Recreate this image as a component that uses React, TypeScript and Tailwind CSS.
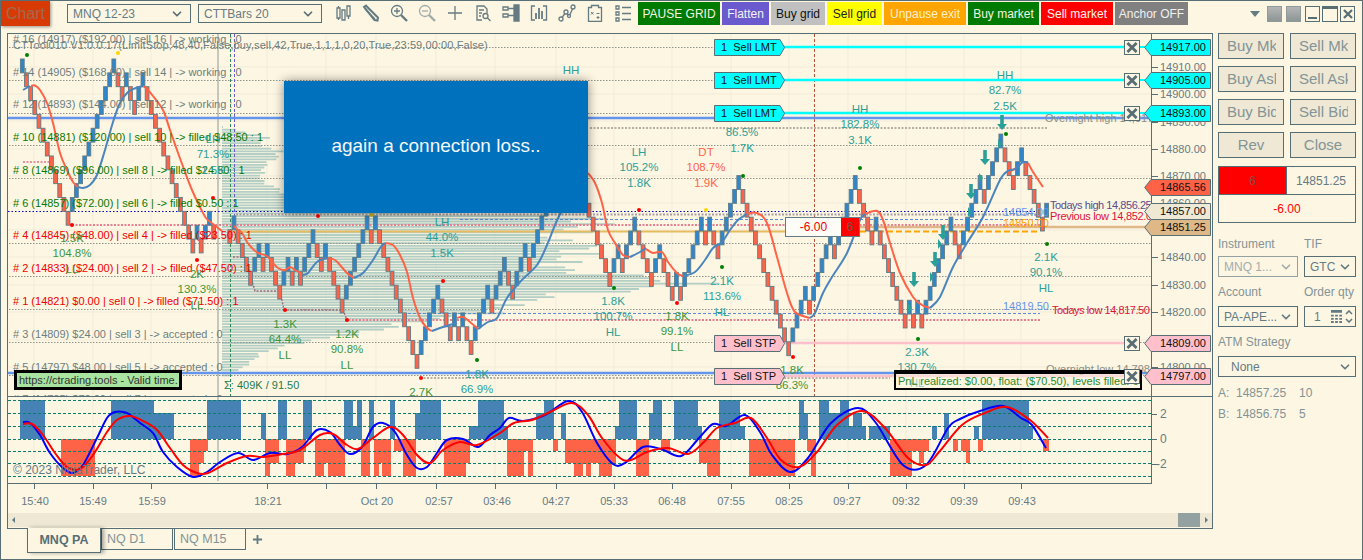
import { ChevronDown } from 'lucide-react'

type Pt = [number, number]
type Bar = { x: number; y: number; up: boolean }

const STEP_X = 4.16
const BRICK = 13.85

// renko bars: every up bar sits one slot higher, every down bar one slot lower
function renko(x0: number, y0: number, firstUp: boolean, runs: number[]) {
  const bars: Bar[] = [{ x: x0, y: y0, up: firstUp }]
  let lev = 0
  let i = 1
  for (const run of runs) {
    const up = run > 0
    for (let n = 0; n < Math.abs(run); n++) {
      lev += up ? -1 : 1
      bars.push({ x: x0 + i * STEP_X, y: y0 + lev * BRICK, up })
      i++
    }
  }
  return bars
}

const BARS = [
  ...renko(22.3, 59, true, [-11, 11, -2, 1, -2, 2, -12, 1, -1, 2, -1]),
  ...renko(229.8, 229.8, false, [1, -4, 2, -1, 1, -3, 2, -1, 1, -1, 3, -2, 1, -4, 6, -1, 1, -10, 5, -3, 1, -1, 1, -2, 4, -1, 3, -2, 3, -1, 4]),
  ...renko(589, 203.3, false, [-5, 2, -1, 3, -4, 2, -3, 1, -1, 5, -1, 1, -2, 5, -12, 4, -1, 5, -1, 5, -4, 1, -7, 1, -1, 1, -1, 7, -2, 5, -1, 4, -3, 2, -5, 1]),
]

function smooth(p: Pt[]) {
  let d = `M${p[0][0]} ${p[0][1]}`
  for (let i = 0; i < p.length - 1; i++) {
    const a = p[i - 1] ?? p[i]
    const b = p[i]
    const c = p[i + 1]
    const e = p[i + 2] ?? c
    d += ` C${b[0] + (c[0] - a[0]) / 6} ${b[1] + (c[1] - a[1]) / 6} ${c[0] - (e[0] - b[0]) / 6} ${c[1] - (e[1] - b[1]) / 6} ${c[0]} ${c[1]}`
  }
  return d
}

const MA_RED: Pt[][] = [
  [[31, 86], [35, 85.5], [40, 90], [47, 103], [53, 123], [60, 153], [67, 170], [73, 182], [78, 187]],
  [[143, 86], [147, 89], [153, 96], [163, 110], [170, 130], [177, 150], [185, 172], [192, 190], [199, 205], [206, 218], [213, 224], [222, 231]],
  [[234, 226], [238, 230], [242, 233], [247, 242], [252, 248], [258, 253], [267, 256], [272, 262], [278, 268], [285, 270], [290, 267], [295, 270], [302, 274]],
  [[328, 258], [335, 260], [340, 265], [347, 273], [354, 278]],
  [[385, 243], [393, 245], [400, 255], [407, 272], [413, 298], [420, 318], [427, 328], [432, 331]],
  [[457, 318], [463, 317], [470, 322], [478, 329]],
  [[588, 173], [595, 183], [602, 203], [608, 230], [615, 243], [623, 255], [630, 257]],
  [[646, 249], [653, 253], [662, 252], [668, 262], [677, 273], [683, 276]],
  [[747, 214], [757, 213], [767, 223], [777, 257], [787, 293], [795, 312], [810, 318]],
  [[865, 214], [877, 211], [883, 220], [890, 243], [900, 273], [913, 297], [922, 305], [930, 308]],
  [[1008, 172], [1017, 168]],
  [[1028, 163], [1033, 172], [1043, 187]],
]
const MA_BLUE: Pt[][] = [
  [[23, 90], [30, 86]],
  [[78, 187], [83, 188], [90, 185], [97, 175], [105, 150], [113, 122], [120, 103], [128, 92], [136, 88], [143, 86]],
  [[303, 275], [308, 273], [317, 262], [328, 258]],
  [[354, 278], [363, 273], [373, 260], [380, 248], [385, 243]],
  [[432, 331], [443, 327], [457, 323]],
  [[478, 329], [488, 322], [497, 318], [507, 298], [520, 282], [537, 265], [547, 245], [555, 225], [562, 210]],
  [[630, 257], [640, 252], [646, 248]],
  [[683, 276], [695, 272], [705, 260], [713, 248], [722, 242], [730, 230], [738, 220], [747, 214]],
  [[810, 318], [815, 313], [823, 293], [832, 277], [847, 253], [860, 220], [865, 214]],
  [[930, 308], [940, 297], [953, 267], [967, 243], [983, 217], [1000, 180], [1008, 171], [1015, 169], [1020, 163]],
  [[1017, 168], [1023, 162], [1028, 163]],
]

const OSC_BLUE: Pt[] = [[23, 422], [30, 423], [40, 435], [50, 453], [63, 468], [73, 473], [83, 465], [97, 438], [107, 418], [115, 412], [127, 413], [140, 423], [153, 433], [163, 452], [177, 467], [193, 477], [207, 472], [220, 462], [238, 453], [253, 460], [270, 453], [287, 454], [302, 447], [317, 430], [330, 432], [340, 445], [350, 454], [362, 447], [373, 427], [383, 423], [395, 432], [407, 455], [417, 468], [427, 467], [437, 453], [447, 440], [463, 439], [478, 447], [490, 435], [500, 428], [509, 418], [523, 421], [545, 415], [568, 401], [582, 412], [597, 443], [613, 464], [625, 463], [643, 447], [661, 449], [681, 456], [699, 438], [713, 424], [726, 426], [745, 415], [760, 432], [772, 455], [790, 472], [808, 458], [831, 423], [858, 408], [876, 423], [903, 465], [926, 465], [948, 428], [960, 419], [980, 411], [1003, 406], [1021, 418], [1032, 425], [1046, 448]]
const OSC_RED: Pt[] = [[23, 424], [32, 424], [43, 435], [55, 453], [67, 467], [80, 469], [93, 455], [107, 432], [117, 420], [130, 416], [143, 421], [157, 430], [170, 448], [183, 465], [197, 473], [208, 473], [227, 463], [247, 456], [263, 457], [283, 454], [300, 450], [320, 435], [333, 434], [347, 445], [358, 449], [373, 438], [390, 427], [403, 435], [417, 455], [430, 463], [443, 450], [460, 442], [477, 445], [500, 433], [514, 423], [532, 420], [550, 412], [572, 403], [588, 415], [602, 438], [620, 458], [631, 460], [647, 452], [668, 448], [688, 454], [704, 442], [717, 428], [735, 423], [751, 418], [767, 438], [781, 460], [799, 467], [817, 452], [837, 425], [862, 411], [885, 428], [908, 458], [926, 465], [939, 452], [962, 425], [985, 413], [1007, 407], [1030, 420], [1048, 438]]

// [from, to, top of bar]
const OSC_UP: number[][] = [[20, 45, 400], [111, 154, 400], [154, 174, 413], [207, 241, 400], [261, 266, 413], [278, 287, 400], [303, 312, 400], [344, 353, 400], [353, 357, 426], [357, 362, 400], [369, 374, 400], [390, 395, 400], [415, 420, 413], [420, 441, 400], [469, 478, 426], [478, 504, 400], [504, 508, 426], [536, 544, 413], [544, 554, 400], [561, 566, 413], [615, 619, 426], [619, 637, 400], [649, 653, 413], [653, 662, 400], [674, 698, 400], [698, 702, 426], [719, 740, 400], [740, 745, 426], [799, 804, 400], [804, 808, 413], [819, 829, 400], [829, 840, 413], [840, 849, 400], [849, 853, 426], [853, 862, 413], [862, 866, 426], [869, 890, 426], [932, 937, 426], [944, 949, 413], [974, 979, 426], [982, 1029, 400], [1029, 1033, 426]]
// [from, to, bottom of bar]
const OSC_DOWN: number[][] = [[61, 95, 476], [190, 199, 476], [199, 204, 463], [204, 208, 451], [265, 270, 476], [270, 279, 463], [286, 295, 476], [295, 304, 463], [304, 306, 451], [315, 324, 476], [324, 328, 463], [328, 345, 476], [361, 370, 476], [374, 379, 476], [379, 382, 463], [382, 391, 476], [394, 403, 451], [403, 416, 476], [444, 466, 476], [466, 470, 463], [507, 524, 476], [524, 528, 451], [528, 533, 476], [533, 537, 439], [553, 558, 451], [565, 574, 463], [574, 583, 476], [583, 586, 463], [586, 591, 476], [591, 599, 463], [599, 612, 476], [612, 616, 463], [636, 649, 476], [661, 670, 451], [699, 707, 463], [707, 720, 476], [749, 795, 476], [807, 811, 451], [811, 816, 476], [890, 912, 476], [912, 919, 451], [919, 924, 463], [924, 929, 451], [953, 958, 451], [961, 966, 451], [966, 970, 463], [978, 983, 451], [1043, 1049, 451]]

const PROFILE: Pt[] = [[127, 223], [133, 250], [138, 270], [143, 258], [147, 265], [150, 280], [157, 278], [165, 265], [180, 260], [200, 300], [212, 400], [218, 600], [225, 590], [232, 570], [238, 545], [247, 587], [255, 575], [262, 560], [270, 560], [277, 640], [282, 697], [288, 660], [295, 560], [302, 513], [312, 497], [322, 413], [332, 370], [342, 303], [352, 263], [365, 247], [378, 226]]

function profileRows() {
  const rows: Pt[] = []
  for (let i = 0, y = 127; y < 378; i++, y += 2.7) {
    const k = PROFILE.findIndex((p) => p[0] > y)
    const [y0, x0] = PROFILE[k - 1]
    const [y1, x1] = PROFILE[k]
    const end = x0 + ((y - y0) / (y1 - y0)) * (x1 - x0)
    rows.push([y, end + (end - 222) * 0.07 * Math.sin(i * 2.3)])
  }
  return rows
}

const ROWS: [number, string, string][] = [
  [39, '# 16 (14917) ($192.00) | sell 16 | -> working : 0', 'text-[#6c7f80]'],
  [72, '# 14 (14905) ($168.00) | sell 14 | -> working : 0', 'text-[#6c7f80]'],
  [104, '# 12 (14893) ($144.00) | sell 12 | -> working : 0', 'text-[#6c7f80]'],
  [137, '# 10 (14881) ($120.00) | sell 10 | -> filled $48.50 : 1', 'text-[#067a06]'],
  [170, '# 8 (14869) ($96.00) | sell 8 | -> filled $24.50 : 1', 'text-[#067a06]'],
  [203, '# 6 (14857) ($72.00) | sell 6 | -> filled $0.50 : 1', 'text-[#067a06]'],
  [235, '# 4 (14845) ($48.00) | sell 4 | -> filled ($23.50) : 1', 'text-[#f00000]'],
  [268, '# 2 (14833) ($24.00) | sell 2 | -> filled ($47.50) : 1', 'text-[#f00000]'],
  [301, '# 1 (14821) $0.00 | sell 0 | -> filled ($71.50) : 1', 'text-[#f00000]'],
  [334, '# 3 (14809) $24.00 | sell 3 | -> accepted : 0', 'text-[#6c7f80]'],
  [367, '# 5 (14797) $48.00 | sell 5 | -> accepted : 0', 'text-[#6c7f80]'],
  [399, '# 7 (14785) $72.00 | sell 7 | -> accepted : 0', 'text-[#6c7f80]'],
]

const TEAL = 'text-[#2aa198]'
const GREEN = 'text-[#3c963c]'
const TOMATO = 'text-[#ff6347]'

// center x, first line y, line spacing, lines
const SWINGS: [number, number, string, string[]][] = [
  [571, 71, TEAL, ['HH']],
  [213, 140, TEAL, ['LH', '71.3%', '1.5K']],
  [72, 239, GREEN, ['1.5K', '104.8%', 'LL']],
  [197, 275, GREEN, ['2K', '130.3%', 'LL']],
  [285, 325, GREEN, ['1.3K', '64.4%', 'LL']],
  [347, 335, GREEN, ['1.2K', '90.8%', 'LL']],
  [421, 393, GREEN, ['2.7K']],
  [442, 223, TEAL, ['LH', '44.0%', '1.5K']],
  [477, 375, TEAL, ['1.8K', '66.9%']],
  [613, 302, TEAL, ['1.8K', '100.7%', 'HL']],
  [677, 317, GREEN, ['1.8K', '99.1%', 'LL']],
  [639, 153, TEAL, ['LH', '105.2%', '1.8K']],
  [706, 153, TOMATO, ['DT', '108.7%', '1.9K']],
  [742, 118, TEAL, ['HH', '86.5%', '1.7K']],
  [722, 282, TEAL, ['2.1K', '113.6%', 'HL']],
  [860, 110, TEAL, ['HH', '182.8%', '3.1K']],
  [1005, 76, TEAL, ['HH', '82.7%', '2.5K']],
  [1046, 258, TEAL, ['2.1K', '90.1%', 'HL']],
  [917, 353, TEAL, ['2.3K', '130.7%', 'HL']],
  [792, 371, GREEN, ['1.8K', '86.3%']],
]

const DOTS: [number, number, string][] = [
  [27, 55, '#008000'], [118, 53, '#ffd700'], [213, 198, '#f00'], [197, 260, '#f00'], [72, 225, '#f00'], [318, 216, '#f00'],
  [372, 215, '#d4ac0d'], [285, 310, '#f00'], [347, 320, '#f00'], [421, 378, '#f00'], [477, 360, '#008000'], [443, 281, '#f00'],
  [639, 210, '#f00'], [706, 210, '#ffd700'], [743, 176, '#008000'], [614, 288, '#008000'], [677, 303, '#f00'], [722, 267, '#008000'],
  [793, 357, '#f00'], [860, 168, '#008000'], [1047, 244, '#008000'], [918, 339, '#008000'], [1006, 134, '#008000'],
]

const ARROWS: Pt[] = [[1002, 115], [985, 150], [971, 184], [943, 225], [935, 252], [914, 272]]
const NUDGES: Pt[] = [[970, 212], [981, 178], [940, 244], [932, 277], [910, 308], [1000, 144]]

const GRID_X = [34, 93, 151, 267, 326, 376, 436, 495, 556, 614, 672, 731, 789, 848, 906, 964, 1021]
const GRID_Y = [67, 94, 121, 149, 176, 203, 230, 257, 285, 312, 340, 367]
const DOTTED_Y = [47, 80, 113, 145, 178, 243, 276, 309, 342, 375]

const AXIS: [number, string][] = [
  [67, '14910.00'], [94, '14900.00'], [122, '14890.00'], [149, '14880.00'], [176, '14870.00'], [203, '14860.00'], [257, '14840.00'], [285, '14830.00'], [312, '14820.00'], [367, '14800.00'],
]

const TIMES: [number, string][] = [
  [35, '15:40'], [93, '15:49'], [152, '15:59'], [268, '18:21'], [377, 'Oct 20'], [439, '02:57'], [497, '03:46'], [556, '04:27'], [614, '05:33'], [672, '06:48'], [731, '07:55'], [789, '08:25'], [847, '09:27'], [906, '09:32'], [964, '09:39'], [1022, '09:43'],
]

const TOOL_BUTTONS: [string, string][] = [
  ['PAUSE GRID', 'w-[82px] bg-[#007a00] text-[#f4f4e4]'],
  ['Flatten', 'w-[47px] bg-[#6a5acd] text-[#f4f4f4]'],
  ['Buy grid', 'w-[54px] bg-[#c0c0c0] text-[#111111]'],
  ['Sell grid', 'w-[55px] bg-[#ffff00] text-[#222222]'],
  ['Unpause exit', 'w-[82px] bg-[#ffa500] text-[#fdf0d0]'],
  ['Buy market', 'w-[71px] bg-[#007a00] text-[#f4f4e4]'],
  ['Sell market', 'w-[72px] bg-[#ff0000] text-[#fff4f4]'],
  ['Anchor OFF', 'w-[73px] bg-[#808080] text-[#f0f0f0]'],
]

function ToolIcons() {
  const c = 'w-[18px] h-[18px] fill-none stroke-[#657b83] stroke-[1.3]'
  return (
    <div className="ml-[12px] flex items-center gap-[10px]">
      <svg viewBox="0 0 18 18" className={c}>
        <path d="M3 4h3v10H3zM8 6h3v10H8z" /><path d="M13 2h3v10h-3z" /><path d="M4.5 2v2M4.5 14v2M14.5 12v3" />
      </svg>
      <svg viewBox="0 0 18 18" className={c}>
        <path d="M2 3l2-1.5 12 12-.5 3-3-.5z" strokeWidth="2" /><path d="M5 3l10 10M3 5l10 10" />
      </svg>
      <svg viewBox="0 0 18 18" className={c}>
        <circle cx="7" cy="7" r="5.5" /><path d="M4 7h6M7 4v6" /><path d="M11 11l6 6" strokeWidth="2.4" />
      </svg>
      <svg viewBox="0 0 18 18" className={`${c} opacity-60`}>
        <circle cx="7" cy="7" r="5.5" /><path d="M4 7h6" /><path d="M11 11l6 6" strokeWidth="2.4" />
      </svg>
      <svg viewBox="0 0 18 18" className={c}>
        <path d="M9 2v14M2 9h14" />
      </svg>
      <svg viewBox="0 0 18 18" className={c}>
        <path d="M8 16H3V2h7l3 3v4" /><path d="M5 6h5M5 9h3M5 12h2" /><circle cx="11.5" cy="12" r="2.5" /><path d="M13.5 14l3 3" />
      </svg>
      <svg viewBox="0 0 18 18" className={c}>
        <path d="M1 3h5v3H1zM1 10h5v3H1z" /><path d="M6 4.5h6M6 11.5h6" /><path d="M12 1h5v16h-5z" fill="#657b83" />
      </svg>
      <svg viewBox="0 0 18 18" className={c}>
        <path d="M5 2H1.5v14H5M13 2h3.500v14H13" /><path d="M6 15V9M9 15V4M12 15V7" strokeWidth="1.8" />
      </svg>
      <svg viewBox="0 0 18 18" className={c}>
        <circle cx="3" cy="15" r="2" /><circle cx="8" cy="8" r="2" /><circle cx="11" cy="12" r="1.500" /><circle cx="15" cy="3" r="2" />
        <path d="M4 13.500l3-4M9 10l1.500 1M12 10.500l2.500-5.500" />
      </svg>
      <svg viewBox="0 0 18 18" className={c}>
        <path d="M2.500 3.500h3V1.500h7v2h3v14h-13z" /><path d="M5 8l2.500 2.500M7.500 8L5 10.500M10.500 9.500h3M12 12v3M10.500 13.500h3" strokeWidth="1" />
      </svg>
      <svg viewBox="0 0 18 18" className={c}>
        <path d="M2 2h3v3H2zM2 8h3v3H2zM2 14h3v3H2z" /><path d="M8 3.500h9M8 9.500h9M8 15.500h9" />
      </svg>
    </div>
  )
}

function ToolSelect({ label }: { label: string }) {
  return (
    <div className="flex h-[19px] w-[124px] items-center justify-between border border-[#586e75] pl-[5px] pr-[6px] text-[12px] text-[#657b83]">
      <span>{label}</span>
      <ChevronDown size={14} strokeWidth={3} className="text-[#586e75]" />
    </div>
  )
}

function Toolbar() {
  return (
    <div className="flex h-[32px] shrink-0 items-start">
      <div className="flex h-[25px] w-[49px] items-center justify-center bg-[#d83a05] text-[16px] text-[#a06a50] shadow-[1px_1px_3px_rgba(0,0,0,0.4)]">Chart</div>
      <div className="ml-[17px] mt-[3px] flex gap-[7px]">
        <ToolSelect label="MNQ 12-23" />
        <ToolSelect label="CTTBars 20" />
      </div>
      <div className="mt-[3px]">
        <ToolIcons />
      </div>
      <div className="ml-[6px] mt-[1px] flex gap-[2px]">
        {TOOL_BUTTONS.map(([label, cls]) => (
          <div key={label} className={`flex h-[23px] items-center justify-center text-[12px] ${cls}`}>{label}</div>
        ))}
      </div>
      <div className="ml-[62px] mt-[5px] flex items-center">
        <span className="h-0 w-0 border-x-[5px] border-t-[6px] border-x-transparent border-t-[#657b83]" />
        <span className="ml-[7px] h-[16px] w-[15px] border border-[#8f9a9a] bg-gradient-to-b from-[#b5b5b5] to-[#8d9595]" />
        <span className="ml-[4px] h-[16px] w-[15px] border border-[#8f9a9a] bg-gradient-to-b from-[#b5b5b5] to-[#8d9595]" />
        <span className="ml-[4px] flex h-[16px] w-[15px] items-end justify-center border border-[#586e75] pb-[2px]"><span className="h-[2px] w-[9px] bg-[#586e75]" /></span>
        <span className="ml-[2px] h-[16px] w-[16px] border border-[#586e75] border-t-[3px]" />
        <span className="ml-[2px] flex h-[16px] w-[15px] items-center justify-center border border-[#586e75]">
          <svg viewBox="0 0 10 10" className="h-[10px] w-[10px] stroke-[#586e75] stroke-[2.2]"><path d="M1 1l8 8M9 1l-8 8" /></svg>
        </span>
      </div>
    </div>
  )
}

function Flag({ y, text, fill }: { y: number; text: string; fill: string }) {
  return (
    <div className="absolute left-[706px] flex h-[17px] w-[71px] items-center" style={{ top: y - 34 - 8.5 }}>
      <svg viewBox="0 0 71 17" className="absolute inset-0 h-[17px] w-[71px]">
        <path d="M.5 .5H66L70.500 8.500L66 16.500H.5z" fill={fill} stroke="#586e75" />
      </svg>
      <span className="relative whitespace-pre pl-[7px] text-[11px] text-[#111111]">{text}</span>
    </div>
  )
}

function CloseBox({ y }: { y: number }) {
  return (
    <div className="absolute left-[1116px] flex h-[15px] w-[16px] items-center justify-center border border-[#586e75] bg-[#fdf6e3]" style={{ top: y - 34 - 7.5 }}>
      <svg viewBox="0 0 12 12" className="h-[11px] w-[12px] stroke-[#586e75] stroke-[3]"><path d="M1 1l10 10M11 1L1 11" /></svg>
    </div>
  )
}

function PriceTag({ y, text, fill }: { y: number; text: string; fill: string }) {
  return (
    <div className="absolute left-[1136px] flex h-[17px] w-[67px] items-center" style={{ top: y - 34 - 8.5 }}>
      <svg viewBox="0 0 67 17" className="absolute inset-0 h-[17px] w-[67px]">
        <path d="M.7 8.500L7 .5H66.500V16.500H7z" fill={fill} stroke="#586e75" />
      </svg>
      <span className="relative pl-[16px] text-[11px] leading-none text-[#111111]">{text}</span>
    </div>
  )
}

function Caption({ x, y, cls, children }: { x: number; y: number; cls: string; children: string }) {
  return (
    <span className={`absolute whitespace-nowrap text-[11px] leading-none ${cls}`} style={{ left: x - 8, top: y - 34 - 5.5 }}>
      {children}
    </span>
  )
}

function MainPane() {
  return (
    <div className="relative h-[362px] shrink-0 overflow-hidden">
      <svg viewBox="8 34 1204 362" className="absolute inset-0 h-full w-full">
        {GRID_X.map((x) => <path key={x} d={`M${x} 34V396`} stroke="#f1ebd9" />)}
        {GRID_Y.map((y) => <path key={y} d={`M8 ${y}H1151`} stroke="#f1ebd9" />)}
        {profileRows().map(([y, end]) => <path key={y} d={`M222 ${y}H${end}`} stroke="#b2cec5" strokeWidth="1.8" />)}
        {DOTTED_Y.map((y) => <path key={y} d={`M9 ${y + 0.5}H1151`} stroke="#8f948a" strokeDasharray="1.500 1.500" />)}
        <path d="M218 34V396" stroke="#8c9a98" />
        <path d="M230.500 34V396" stroke="#2e8b57" strokeDasharray="3 2" />
        <path d="M234.500 34V216" stroke="#6a5acd" strokeDasharray="3 2" />
        <path d="M814.500 34V396" stroke="#b5553a" strokeDasharray="3 2" />
        <path d="M590 128H1047" stroke="#b5afa4" strokeWidth="2" strokeDasharray="2 1.500" />
        <path d="M236 214.500H1040" stroke="#a9a0a4" strokeWidth="2" strokeDasharray="2 1.500" />
        <path d="M460 219.500H1040" stroke="#5b8bd8" strokeDasharray="3 2" />
        <path d="M8 211.500H1040" stroke="#0000cc" strokeDasharray="1.500 2" />
        <path d="M72 225H1040" stroke="#e77f91" strokeWidth="2" strokeDasharray="2 1.500" />
        <path d="M23 162H50L56 175" stroke="#e7909e" strokeWidth="2" fill="none" strokeDasharray="2 1.500" />
        <path d="M230 231.500H785" stroke="#e6bc60" strokeWidth="2" />
        <path d="M860 231.500H1040" stroke="#ffa500" strokeWidth="2" strokeDasharray="6 3" />
        <path d="M403 313.500H1040" stroke="#5b8bd8" strokeDasharray="3 2" />
        <path d="M345 320H1040" stroke="#e77f91" strokeWidth="2" strokeDasharray="2 1.500" />
        <path d="M420 378H890" stroke="#b5afa4" strokeWidth="2" strokeDasharray="2 1.500" />
        <path d="M233 257H245L255 291H280L284 310H343L347 320" stroke="#a06a7a" fill="none" strokeWidth="1.400" strokeDasharray="2 1.500" />
        <path d="M8 118H1151M8 373H1151" stroke="#6495ed" strokeWidth="2.500" />
        <path d="M784 47H1124M784 80H1124M784 113H1124" stroke="#00ffff" strokeWidth="2.500" />
        <path d="M784 343H1124M784 376H1124" stroke="#ffc0cb" strokeWidth="2.500" />
        <path d="M1140 47H1146M1140 80H1146M1140 113H1146" stroke="#00ffff" strokeWidth="2" />
        <path d="M860 227H1146" stroke="#deb887" strokeWidth="2.500" />
        {BARS.map((b, i) => (
          <rect key={i} x={b.x - 1.9} y={b.y} width="3.8" height={BRICK} fill={b.up ? '#2e86cb' : '#ff6347'} stroke="#5f7b85" strokeWidth="0.9" />
        ))}
        {MA_RED.map((p, i) => <path key={i} d={smooth(p)} fill="none" stroke="#ff6347" strokeWidth="2" />)}
        {MA_BLUE.map((p, i) => <path key={i} d={smooth(p)} fill="none" stroke="#4a85bd" strokeWidth="2" />)}
        {DOTS.map(([x, y, fill]) => <circle key={`${x}-${y}`} cx={x} cy={y} r="2" fill={fill} />)}
        {ARROWS.map(([x, y]) => <path key={x} d={`M${x - 1.8} ${y}h3.600v9h3.200l-5 6l-5 -6h3.200z`} fill="#2aa198" />)}
        {NUDGES.map(([x, y]) => <path key={x} d={`M${x - 2} ${y - 5}l4 5l-4 5z`} fill="#2aa198" />)}
      </svg>

      <Caption x={13} y={45} cls="tracking-[0.1px] text-[#6c7f80]">CTTool010 V1.0.0.17(LimitStop,48,40,False,buy,sell,42,True,1,1,1,0,20,True,23:59,00:00,False)</Caption>
      {ROWS.map(([y, text, cls]) => <Caption key={y} x={13} y={y} cls={cls}>{text}</Caption>)}

      {SWINGS.map(([x, y, cls, lines]) => lines.map((line, i) => (
        <span key={`${x}-${i}`} className={`absolute -translate-x-1/2 whitespace-nowrap text-[11.5px] leading-none ${cls}`} style={{ left: x - 8, top: y - 34 - 6 + i * 15.3 }}>
          {line}
        </span>
      )))}

      <Caption x={1050} y={205} cls="tracking-[-0.45px] text-[#5b4b8a]">Todays high 14,856.25</Caption>
      <Caption x={1050} y={216} cls="tracking-[-0.3px] text-[#dc143c]">Previous low 14,852.00</Caption>
      <Caption x={1003} y={212} cls="text-[#6495ed]">14854.00</Caption>
      <Caption x={1003} y={223} cls="text-[#ffa500]">14850.00</Caption>
      <Caption x={1003} y={306} cls="text-[#6495ed]">14819.50</Caption>
      <Caption x={1052} y={310} cls="tracking-[-0.45px] text-[#dc143c]">Todays low 14,817.50</Caption>
      <Caption x={1045} y={118} cls="text-[#8a8f85]">Overnight high 14,917.5</Caption>
      <Caption x={1046} y={369} cls="text-[#8a8f85]">Overnight low 14,798.25</Caption>
      <Caption x={224} y={385} cls="text-[#1f7a4f]">Σ: 409K / 91.50</Caption>

      <div className="absolute left-[276px] top-[47px] flex h-[132px] w-[304px] items-center justify-center bg-[#0071bc] pb-[2px] text-[19px] text-[#f4f8fc] shadow-[0_0_10px_rgba(0,0,0,0.45)]">
        again a connection loss..
      </div>

      <div className="absolute left-[6px] top-[336px] flex h-[20px] w-[168px] items-center whitespace-nowrap border-[3px] border-black bg-[#a9e5a0] pl-[2px] text-[11px] text-[#333333]">
        https://ctrading.tools - Valid time.
      </div>

      <div className="absolute left-[886px] top-[336px] flex h-[20px] w-[248px] items-center overflow-hidden border-x-2 border-t-[4px] border-b-2 border-black bg-[#fdf6e3]/50 pl-[2px] text-[11px] text-[#2a8a2a]">
        <span className="whitespace-nowrap">PnL realized: $0.00, float: ($70.50), levels filled: 6</span>
      </div>

      <Flag y={47} text="1  Sell LMT" fill="#00ffff" />
      <Flag y={80} text="1  Sell LMT" fill="#00ffff" />
      <Flag y={113} text="1  Sell LMT" fill="#00ffff" />
      <Flag y={343} text="1  Sell STP" fill="#ffc0cb" />
      <Flag y={376} text="1  Sell STP" fill="#ffc0cb" />

      <CloseBox y={47} />
      <CloseBox y={80} />
      <CloseBox y={113} />
      <CloseBox y={343} />
      <CloseBox y={376} />

      <div className="absolute left-[777px] top-[183px] flex h-[20px] w-[75px] border border-[#657b83] bg-[#fdfcf6]">
        <span className="flex flex-1 items-center justify-center text-[12px] text-[#f00000]">-6.00</span>
        <span className="flex w-[18px] items-center justify-center bg-[#ff0000] text-[12px] text-[#8a4a4a]">6</span>
      </div>

      <div className="absolute bottom-0 left-[1143px] top-0 w-[61px] border-l border-[#586e75] bg-[#fdf6e3]">
        {AXIS.map(([y, text]) => (
          <div key={text} className="absolute left-0 flex items-center" style={{ top: y - 34 - 6 }}>
            <span className="h-px w-[6px] bg-[#586e75]" />
            <span className="ml-[2px] text-[11px] leading-[12px] text-[#657b83]">{text}</span>
          </div>
        ))}
      </div>

      <PriceTag y={47} text="14917.00" fill="#00ffff" />
      <PriceTag y={80} text="14905.00" fill="#00ffff" />
      <PriceTag y={113} text="14893.00" fill="#00ffff" />
      <PriceTag y={187} text="14865.56" fill="#ff6347" />
      <PriceTag y={211} text="14857.00" fill="#eee8d5" />
      <PriceTag y={227} text="14851.25" fill="#deb887" />
      <PriceTag y={343} text="14809.00" fill="#ffc0cb" />
      <PriceTag y={376} text="14797.00" fill="#ffc0cb" />
    </div>
  )
}

function OscPane() {
  return (
    <div className="relative h-[88px] shrink-0 overflow-hidden border-t border-[#586e75]">
      <svg viewBox="8 397 1204 87" className="absolute inset-0 h-full w-full">
        {GRID_X.map((x) => <path key={x} d={`M${x} 397V484`} stroke="#f1ebd9" />)}
        <path d="M218 397V481" stroke="#8c9a98" />
        {OSC_UP.map(([a, b, top]) => <rect key={a} x={a} y={top} width={b - a} height={439 - top} fill="#4682b4" />)}
        {OSC_DOWN.map(([a, b, bottom]) => <rect key={a} x={a} y={439} width={b - a} height={bottom - 439} fill="#ff6347" />)}
        {[400, 413, 426, 451, 463, 476].map((y) => <path key={y} d={`M8 ${y}.5H1151`} stroke="#0a7d6e" strokeDasharray="3 2" />)}
        <path d="M8 439.500H1151" stroke="#0a7d6e" strokeDasharray="3 2" />
        <path d={smooth(OSC_BLUE)} fill="none" stroke="#0000ff" strokeWidth="2" />
        <path d={smooth(OSC_RED)} fill="none" stroke="#ff0000" strokeWidth="2" />
        <path d="M1151 439.500h6M1151 414.500h6M1151 464.500h6" stroke="#586e75" />
      </svg>
      <span className="absolute left-[5px] top-[67px] text-[12px] leading-none text-[#657b83]">© 2023 NinjaTrader, LLC</span>
      <div className="absolute bottom-0 right-0 top-0 w-[61px] border-l border-[#586e75]">
        <span className="absolute left-[8px] top-[11px] text-[12px] leading-none text-[#657b83]">2</span>
        <span className="absolute left-[8px] top-[36px] text-[12px] leading-none text-[#657b83]">0</span>
        <span className="absolute left-[4px] top-[61px] text-[12px] leading-none text-[#657b83]">-2</span>
      </div>
      <div className="absolute bottom-0 left-0 right-[60px] h-px bg-[#586e75]" />
    </div>
  )
}

function TimeAxis() {
  return (
    <div className="relative h-[29px] shrink-0">
      {GRID_X.map((x) => <span key={x} className="absolute top-0 h-[5px] w-px bg-[#586e75]" style={{ left: x - 8 }} />)}
      {TIMES.map(([x, text]) => (
        <span key={text} className="absolute top-[12px] -translate-x-1/2 whitespace-nowrap text-[11px] leading-none text-[#657b83]" style={{ left: x - 8 }}>{text}</span>
      ))}
    </div>
  )
}

function Scrollbar() {
  return (
    <div className="flex h-[14px] shrink-0 items-center bg-[#eee8d5]">
      <span className="ml-[4px] h-0 w-0 border-y-[3px] border-r-[3px] border-y-transparent border-r-[#657b83]" />
      <span className="ml-[1163px] h-full w-[22px] bg-[#93a1a1]" />
      <span className="ml-[5px] h-0 w-0 border-y-[3px] border-l-[3px] border-y-transparent border-l-[#657b83]" />
    </div>
  )
}

function Tabs() {
  return (
    <div className="flex h-[24px] items-start pl-[26px]">
      <div className="z-10 -mt-px flex h-[25px] w-[74px] items-center justify-center border-x border-b border-[#586e75] bg-[#fdf6e3] text-[12.5px] font-bold text-[#586e75] shadow-[3px_0_4px_rgba(0,0,0,0.35)]">MNQ PA</div>
      <div className="flex h-[21px] w-[72px] items-center border-x border-b border-[#586e75] pl-[5px] text-[12.5px] text-[#839496]">NQ D1</div>
      <div className="ml-px flex h-[21px] w-[72px] items-center border-x border-b border-[#586e75] pl-[5px] text-[12.5px] text-[#839496]">NQ M15</div>
      <svg viewBox="0 0 12 12" className="ml-[6px] mt-[5px] h-[11px] w-[11px] stroke-[#657b83] stroke-[2]"><path d="M6 1v10M1 6h10" /></svg>
    </div>
  )
}

function SidePanel() {
  const btn = 'flex h-[26px] items-center overflow-hidden border border-[#586e75] bg-[#eee8d5] text-[15px] text-[#839496]'
  const label = 'text-[12px] leading-none text-[#839496]'
  const field = 'flex h-[21px] items-center justify-between border border-[#586e75] text-[12px] text-[#657b83]'
  const cols = 'grid grid-cols-[80px_52px] gap-x-[6px]'
  return (
    <div className="ml-[5px] flex w-[138px] flex-col">
      <div className="grid grid-cols-2 gap-x-[6px] gap-y-[7px]">
        {['Buy Mkt', 'Sell Mkt', 'Buy Ask', 'Sell Ask', 'Buy Bid', 'Sell Bid'].map((text) => (
          <div key={text} className={`${btn} pl-[8px]`}>
            <span className="w-[49px] overflow-hidden whitespace-nowrap">{text}</span>
          </div>
        ))}
        <div className={`${btn} justify-center`}>Rev</div>
        <div className={`${btn} justify-center`}>Close</div>
      </div>
      <div className="mt-[8px] h-[57px] border border-[#586e75]">
        <div className="flex h-[28px] border-b border-[#586e75]">
          <span className="flex w-[68px] items-center justify-center border-r border-[#586e75] bg-[#ff0000] text-[12px] text-[#8a4a4a]">6</span>
          <span className="flex flex-1 items-center justify-center text-[12px] text-[#657b83]">14851.25</span>
        </div>
        <div className="flex h-[27px] items-center justify-center text-[12px] text-[#ff0000]">-6.00</div>
      </div>
      <div className={`${cols} mt-[15px]`}>
        <span className={label}>Instrument</span>
        <span className={label}>TIF</span>
      </div>
      <div className={`${cols} mt-[6px]`}>
        <div className="flex h-[21px] items-center justify-between border border-[#93a1a1] pl-[5px] pr-[4px] text-[12px] text-[#a3adad]">
          <span>MNQ 1...</span><ChevronDown size={14} strokeWidth={3} />
        </div>
        <div className={`${field} pl-[5px] pr-[3px]`}>
          <span>GTC</span><ChevronDown size={14} strokeWidth={3} />
        </div>
      </div>
      <div className={`${cols} mt-[9px]`}>
        <span className={label}>Account</span>
        <span className={label}>Order qty</span>
      </div>
      <div className={`${cols} mt-[8px]`}>
        <div className={`${field} pl-[5px] pr-[4px]`}>
          <span>PA-APE...</span><ChevronDown size={14} strokeWidth={3} />
        </div>
        <div className={`${field} pl-[9px] pr-[2px]`}>
          <span>1</span>
          <span className="ml-auto flex items-center gap-[3px]">
            <svg viewBox="0 0 12 14" className="h-[13px] w-[11px] fill-[#657b83]">
              <path d="M0 0h12v3H0zM0 5h3v2H0zM4.500 5h3v2h-3zM9 5h3v2H9zM0 8.500h3v2H0zM4.500 8.500h3v2h-3zM9 8.500h3v2H9zM0 12h3v2H0zM4.500 12h3v2h-3zM9 12h3v2H9z" />
            </svg>
            <span className="flex flex-col gap-[3px]">
              <svg viewBox="0 0 8 5" className="h-[5px] w-[8px] fill-none stroke-[#657b83] stroke-[1.6]"><path d="M1 4l3-3 3 3" /></svg>
              <svg viewBox="0 0 8 5" className="h-[5px] w-[8px] fill-none stroke-[#657b83] stroke-[1.6]"><path d="M1 1l3 3 3-3" /></svg>
            </span>
          </span>
        </div>
      </div>
      <span className={`${label} mt-[9px]`}>ATM Strategy</span>
      <div className={`${field} mt-[8px] pl-[12px] pr-[3px]`}>
        <span>None</span><ChevronDown size={14} strokeWidth={3} />
      </div>
      <div className="mt-[10px] flex text-[12px] leading-none text-[#839496]">
        <span className="w-[18px]">A:</span><span className="w-[63px]">14857.25</span><span>10</span>
      </div>
      <div className="mt-[9px] flex text-[12px] leading-none text-[#839496]">
        <span className="w-[18px]">B:</span><span className="w-[63px]">14856.75</span><span>5</span>
      </div>
    </div>
  )
}

export default function App() {
  return (
    <div className="flex h-[560px] w-[1363px] flex-col overflow-hidden border border-[#586e75] bg-[#fdf6e3] [font-family:'Liberation_Sans',Arial,sans-serif]">
      <Toolbar />
      <div className="flex pl-[6px]">
        <div className="flex h-[496px] w-[1206px] flex-col border border-[#586e75]">
          <MainPane />
          <OscPane />
          <TimeAxis />
          <Scrollbar />
        </div>
        <SidePanel />
      </div>
      <Tabs />
    </div>
  )
}
